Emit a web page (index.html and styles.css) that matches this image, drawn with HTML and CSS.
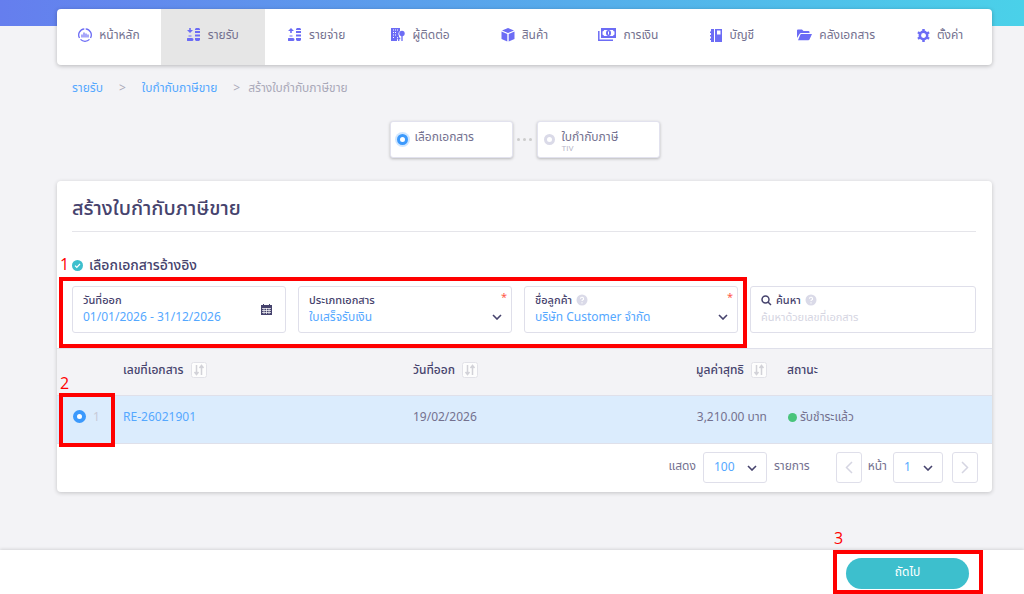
FILE: index.html
```html
<!DOCTYPE html>
<html lang="th">
<head>
<meta charset="utf-8">
<meta name="viewport" content="width=device-width, initial-scale=1">
<title>สร้างใบกำกับภาษีขาย</title>
<link rel="stylesheet" href="styles.css">
</head>
<body>
<svg class="defs" aria-hidden="true">
  <symbol id="chevron" viewBox="0 0 10 6"><path d="M1 1l4 4 4-4" fill="none" stroke="currentColor" stroke-width="1.6"/></symbol>
  <symbol id="help" viewBox="0 0 12 12"><circle cx="6" cy="6" r="5.5" fill="#dadae8"/><path d="M4.4 4.8a1.6 1.5 0 1 1 2.2 1.3q-.6.3-.6.9M6 8.2v1.2" fill="none" stroke="#fff" stroke-width="1.1"/></symbol>
  <symbol id="sort" viewBox="0 0 16 16"><rect x=".5" y=".5" width="15" height="15" rx="2" fill="#fdfdfd" stroke="#e2e2e8"/><path d="M5.5 3v9M3.5 10l2 2.5 2-2.5M10.5 13V4M8.500 6l2-2.500 2 2.500" fill="none" stroke="#d2d2d8" stroke-width="1.5"/></symbol>
</svg>
<header class="topbar">
  <nav class="nav">
    <a class="nav-item" href="#"><svg width="14" height="14" viewBox="0 0 14 14" fill="none" stroke="currentColor"><path d="M7.700.8A6.200 6.200 0 0 1 12.500 10M11.500 11.400A6.200 6.200 0 0 1 2.500 11.400M1.500 10A6.200 6.200 0 0 1 6.300.8" stroke-width="1.300"/><path d="M4 6.500V9.500M6 4.500V9.500M8 5.500V9.500M10 6.500V9.500" stroke-width="1.200"/></svg>หน้าหลัก</a>
    <a class="nav-item active" href="#"><svg width="14" height="14" viewBox="0 0 14 14" fill="currentColor"><path d="M2.200 0h1.600v2H6L3 5 0 2h2.200zM1.500 7.500h3v1h-3zM1 10h4a1 1 0 0 1 0 3H1a1 1 0 0 1 0-3zM9 0h3l1 1v1H8V1zM8 3h5v2H8zM8 6.500h5v2H8zM8 10h5v2l-1 1H9l-1-1z"/></svg>รายรับ</a>
    <a class="nav-item" href="#"><svg width="14" height="14" viewBox="0 0 14 14" fill="currentColor"><path d="M3 0l3 3H3.800v2H2.200V3H0zM1.500 7.500h3v1h-3zM1 10h4a1 1 0 0 1 0 3H1a1 1 0 0 1 0-3zM9 0h3l1 1v1H8V1zM8 3h5v2H8zM8 6.500h5v2H8zM8 10h5v2l-1 1H9l-1-1z"/></svg>รายจ่าย</a>
    <a class="nav-item" href="#"><svg width="14" height="14" viewBox="0 0 14 14"><path d="M0 0h9v3a4 4 0 0 0-1 5v1H6v4H0z" fill="currentColor"/><path d="M2 2h1M4 2h1M6 2h1M2 4.500h1M4 4.500h1M2 7h1M4 7h1M2 9.500h1" stroke="#fff"/><circle cx="11" cy="5.500" r="2.700" fill="currentColor"/><path d="M11 6v7M7.700 9v4M6.300 10.500h3" stroke="currentColor" stroke-width="1.300"/></svg>ผู้ติดต่อ</a>
    <a class="nav-item" href="#"><svg width="14" height="14" viewBox="0 0 14 14" fill="currentColor"><path d="M7 0l6 2.400L7 5 1 2.400zM.5 3.600L6.300 6v7.500L.5 11zM13.500 3.600L7.700 6v7.500l5.800-2.500z"/></svg>สินค้า</a>
    <a class="nav-item" href="#"><svg width="18" height="14" viewBox="0 0 18 14"><path d="M3 0h15v10H3z" fill="currentColor"/><path d="M6 2h9q0 1 1.500 1.500v3Q15 7 15 8H6q0-1-1.500-1.500v-3Q6 3 6 2z" fill="#fff"/><ellipse cx="10.500" cy="5" rx="2.500" ry="3" fill="currentColor"/><path d="M10.500 3.500v3" stroke="#fff"/><path d="M.8 3v9.200H15" fill="none" stroke="currentColor" stroke-width="1.500"/></svg>การเงิน</a>
    <a class="nav-item" href="#"><svg width="12" height="13" viewBox="0 0 12 13"><path d="M1 0h3v13H1v-2H0V9.500h1v-2H0V6h1V4H0V2.500h1zM5 0h7v13H5z" fill="currentColor"/><path d="M7 1.500h3.500v4H7z" fill="#fff"/></svg>บัญชี</a>
    <a class="nav-item" href="#"><svg width="15" height="12" viewBox="0 0 15 12" fill="currentColor"><path d="M0 9V1.500Q0 .5 1 .5h4l1.500 1.500h5q1 0 1 1v1H4Q3 4 2.500 5zM3.300 5.700Q3.500 5 4.300 5H15l-2.500 5.500q-.4.800-1.200.800H1z"/></svg>คลังเอกสาร</a>
    <a class="nav-item" href="#"><svg width="13" height="13" viewBox="0 0 13 13"><path fill="none" stroke="currentColor" stroke-width="2.500" d="M6.500 2.800a3.700 3.700 0 1 1 0 7.400 3.700 3.700 0 0 1 0-7.400z"/><path d="M6.500 0v3M6.500 10v3M.9 3.200l2.500 1.500M9.600 8.300l2.500 1.500M.9 9.800l2.500-1.500M9.600 4.700l2.500-1.500" stroke="currentColor" stroke-width="2.500"/></svg>ตั้งค่า</a>
  </nav>
</header>
<main class="main">
  <nav class="crumbs" aria-label="breadcrumb"><a href="#">รายรับ</a><span class="sep">&gt;</span><a href="#">ใบกำกับภาษีขาย</a><span class="sep last">&gt;</span><span>สร้างใบกำกับภาษีขาย</span></nav>
  <div class="steps">
    <div class="step current"><span class="ring"></span><span>เลือกเอกสาร</span></div>
    <div class="dots"><i></i><i></i><i></i></div>
    <div class="step"><span class="ring"></span><span>ใบกำกับภาษี<small>TIV</small></span></div>
  </div>
  <section class="card">
    <div class="card-top">
      <h1>สร้างใบกำกับภาษีขาย</h1>
      <h2><svg width="11" height="11" viewBox="0 0 11 11"><circle cx="5.500" cy="5.500" r="5.500" fill="#3dbfcd"/><path d="M3 5.600l1.800 1.700L8 4" fill="none" stroke="#fff" stroke-width="1.200"/></svg>เลือกเอกสารอ้างอิง</h2>
      <div class="filters">
        <div class="marked">
          <div class="field"><label for="date">วันที่ออก</label><input id="date" type="text" value="01/01/2026 - 31/12/2026">
            <svg class="field-icon" width="11" height="11" viewBox="0 0 11 11"><path d="M0 1h11v10H0z" fill="#46436d"/><path d="M2.500 0v2M8.500 0v2" stroke="#46436d"/><path d="M1 4.500h9M1 6.500h9M1 8.500h9M3 4v6M5.500 4v6M8 4v6" stroke="#fff" stroke-width=".7"/></svg></div>
          <div class="field"><label for="type">ประเภทเอกสาร</label><select id="type"><option>ใบเสร็จรับเงิน</option></select><span class="star">*</span><svg class="field-icon low" width="10" height="6"><use href="#chevron"/></svg></div>
          <div class="field"><label for="customer">ชื่อลูกค้า <svg width="12" height="12"><use href="#help"/></svg></label><select id="customer"><option>บริษัท Customer จำกัด</option></select><span class="star">*</span><svg class="field-icon low" width="10" height="6"><use href="#chevron"/></svg></div>
          <div class="mark mark-filters"><b>1</b></div>
        </div>
        <div class="field search"><label for="search"><svg width="11" height="11" viewBox="0 0 11 11" fill="none" stroke="currentColor" stroke-width="1.500"><circle cx="4.500" cy="4.500" r="3.500"/><path d="M7 7l3 3"/></svg> ค้นหา <svg width="12" height="12"><use href="#help"/></svg></label><input id="search" type="text" placeholder="ค้นหาด้วยเลขที่เอกสาร"></div>
      </div>
    </div>
    <table class="docs">
      <thead><tr><th class="c-pick"></th><th class="c-no">เลขที่เอกสาร<svg width="16" height="16"><use href="#sort"/></svg></th><th class="c-date">วันที่ออก<svg width="16" height="16"><use href="#sort"/></svg></th><th class="c-sum">มูลค่าสุทธิ<svg width="16" height="16"><use href="#sort"/></svg></th><th>สถานะ</th></tr></thead>
      <tbody><tr><td class="c-pick"><label><input type="radio" name="doc" checked><span>1</span></label><div class="mark mark-row"><b>2</b></div></td><td><a href="#">RE-26021901</a></td><td>19/02/2026</td><td class="c-sum">3,210.00 บาท</td><td><span class="paid"></span>รับชำระแล้ว</td></tr></tbody>
    </table>
    <div class="pager">
      <label for="size">แสดง</label>
      <div class="pick size"><select id="size"><option>100</option></select><svg width="10" height="6"><use href="#chevron"/></svg></div>
      <span class="unit">รายการ</span>
      <button type="button" aria-label="ก่อนหน้า"><svg width="8" height="13" viewBox="0 0 8 13"><path d="M7 1L1.500 6.500 7 12" fill="none" stroke="currentColor" stroke-width="1.500"/></svg></button>
      <label for="page">หน้า</label>
      <div class="pick page"><select id="page"><option>1</option></select><svg width="10" height="6"><use href="#chevron"/></svg></div>
      <button class="next" type="button" aria-label="ถัดไป"><svg width="8" height="13" viewBox="0 0 8 13"><path d="M1 1l5.500 5.500L1 12" fill="none" stroke="currentColor" stroke-width="1.500"/></svg></button>
    </div>
  </section>
</main>
<footer class="actions"><div class="submit"><button type="button">ถัดไป</button><div class="mark mark-submit"><b>3</b></div></div></footer>
</body>
</html>
```
FILE: styles.css
```css
* { box-sizing: border-box; }
body { margin: 0; min-height: 100vh; display: flex; flex-direction: column; background: #f3f3f6; color: #74718f; font: 12px/20px "Noto Sans", "Noto Sans Thai", sans-serif; }
a { color: #55a8ff; text-decoration: none; }
input, select, button { font: inherit; }
svg { flex: none; }
.defs { display: none; }
.topbar { height: 26px; padding: 9px 32px 0 57px; background: linear-gradient(90deg, #657eee, #4ad1e9); }
.nav { display: grid; grid-template-columns: repeat(9, 1fr); height: 56px; background: #fff; border-radius: 4px; box-shadow: 0 1px 4px rgba(0, 0, 0, .25); overflow: hidden; }
.nav-item { display: flex; align-items: center; justify-content: center; gap: 7px; padding-bottom: 4px; color: #74718f; white-space: nowrap; }
.nav-item svg { color: #6c6cf5; }
.nav-item.active { background: #e6e6e6; }
.main { flex: 1; padding: 52px 32px 57px 57px; }
.crumbs { display: flex; padding-left: 15px; color: #aaa9b9; }
.sep { margin: 0 16px; }
.sep.last { margin-right: 8px; }
.steps { display: flex; justify-content: center; margin-top: 23px; }
.step { display: flex; gap: 7px; width: 123px; height: 37px; padding: 7px 6px; background: #fff; border: 1px solid #e2e2ee; border-radius: 3px; box-shadow: 0 1px 3px rgba(0, 0, 0, .25); line-height: 16px; }
.step small { display: block; font: 8px/8px Roboto, sans-serif; color: #b8b7c8; }
.ring { width: 11px; height: 11px; margin-top: 5px; border: 3px solid #dadae8; border-radius: 50%; background: #fff; }
.current .ring { border-color: #3b99fc; box-shadow: 0 0 0 2px #cfe6ff; }
.dots { display: flex; align-items: center; justify-content: center; gap: 3px; width: 24px; }
.dots i { width: 3px; height: 3px; border-radius: 50%; background: #ccc; }
.card { margin-top: 23px; background: #fff; border-radius: 4px; box-shadow: 0 1px 4px rgba(0, 0, 0, .2); }
.card-top { padding: 12px 16px 15px 15px; }
h1 { margin: 0; height: 39px; border-bottom: 1px solid #e5e5ea; font-size: 20px; font-weight: 500; line-height: 30px; color: #46436d; }
h2 { display: flex; align-items: center; gap: 6px; margin: 23px 0 11px; font-size: 14px; font-weight: 500; line-height: 20px; color: #46436d; }
.filters { display: flex; gap: 12px; }
.marked { position: relative; flex: 1; display: grid; grid-template-columns: repeat(3, 1fr); gap: 12px; }
.field { position: relative; height: 47px; padding: 5px 10px; border: 1px solid #dfdfea; border-radius: 3px; }
.field label { display: flex; align-items: center; gap: 4px; font-size: 11px; font-weight: 500; line-height: 16px; color: #46436d; }
.field input, .field select { display: block; width: 100%; height: 18px; padding: 0; border: 0; background: none; color: #55a8ff; line-height: 18px; appearance: none; }
.field input::placeholder { color: #d5d5e2; opacity: 1; font-size: 11px; }
.field-icon { position: absolute; right: 13px; top: 17px; }
.field-icon.low { right: 9px; top: 27px; color: #46436d; }
.star { position: absolute; right: 4px; top: 0; color: #ff5a4a; font-size: 11px; line-height: 20px; }
.search { width: 226px; }
.mark { position: absolute; border: 4px solid #f00; pointer-events: none; }
.mark b { position: absolute; left: -3px; bottom: 100%; margin-bottom: 7px; color: #f00; font: 16px/20px "Open Sans", sans-serif; }
.mark-filters { inset: -9px -9px -15px -13px; }
.docs { width: 100%; border-collapse: collapse; table-layout: fixed; }
.docs th, .docs td { height: 48px; padding: 0 10px 4px; border-top: 1px solid #dfe0ea; border-bottom: 1px solid #dfe0ea; text-align: left; white-space: nowrap; }
.docs th { height: 47px; background: #f3f3f6; color: #46436d; font-weight: 500; }
.docs th svg { margin-left: 7px; vertical-align: -4px; }
.docs td { padding-bottom: 6px; background: #dbecfd; }
.docs .c-pick { position: relative; width: 6%; padding-left: 16px; }
.docs .c-no { width: 31%; }
.docs .c-date { width: 25%; }
.docs .c-sum { width: 15%; text-align: right; }
.c-pick label { display: flex; align-items: center; gap: 7px; color: #c8cad8; }
.c-pick input { appearance: none; width: 13px; height: 13px; margin: 0; border: 4px solid #3b99fc; border-radius: 50%; background: #fff; }
.mark-row { left: 2px; top: -3px; width: 56px; height: 54px; }
.mark-row b { margin-bottom: 4px; }
.paid { display: inline-block; width: 9px; height: 9px; margin: 0 3px 0 1px; border-radius: 50%; background: #49c47b; vertical-align: -1px; }
.pager { display: flex; align-items: flex-start; justify-content: flex-end; height: 48px; padding: 8px 14px 0 0; line-height: 28px; }
.pick { position: relative; }
.pick select { display: block; width: 100%; height: 31px; padding: 0 10px 4px; border: 1px solid #dfdfea; border-radius: 3px; background: #fff; color: #55a8ff; appearance: none; }
.pick svg { position: absolute; right: 10px; top: 13px; color: #46436d; }
.size { width: 64px; margin: 0 7px; }
.page { width: 50px; margin: 0 9px 0 6px; }
.unit { margin-right: 26px; }
.pager button { display: grid; place-items: center; width: 26px; height: 31px; margin-right: 6px; padding: 0; border: 1px solid #dfdfea; border-radius: 3px; background: #fff; color: #d5d5e2; }
.pager .next { margin-right: 0; }
.actions { display: flex; justify-content: flex-end; height: 44px; padding: 8px 55px 5px 0; background: #fff; box-shadow: 0 -1px 3px rgba(0, 0, 0, .12); }
.submit { position: relative; }
.submit button { display: block; width: 123px; height: 31px; padding: 0 0 4px; border: 0; border-radius: 16px; background: #3dbfcd; color: #fff; }
.mark-submit { inset: -8px -14px -5px -13px; }
.mark-submit b { margin-bottom: 6px; }
```
